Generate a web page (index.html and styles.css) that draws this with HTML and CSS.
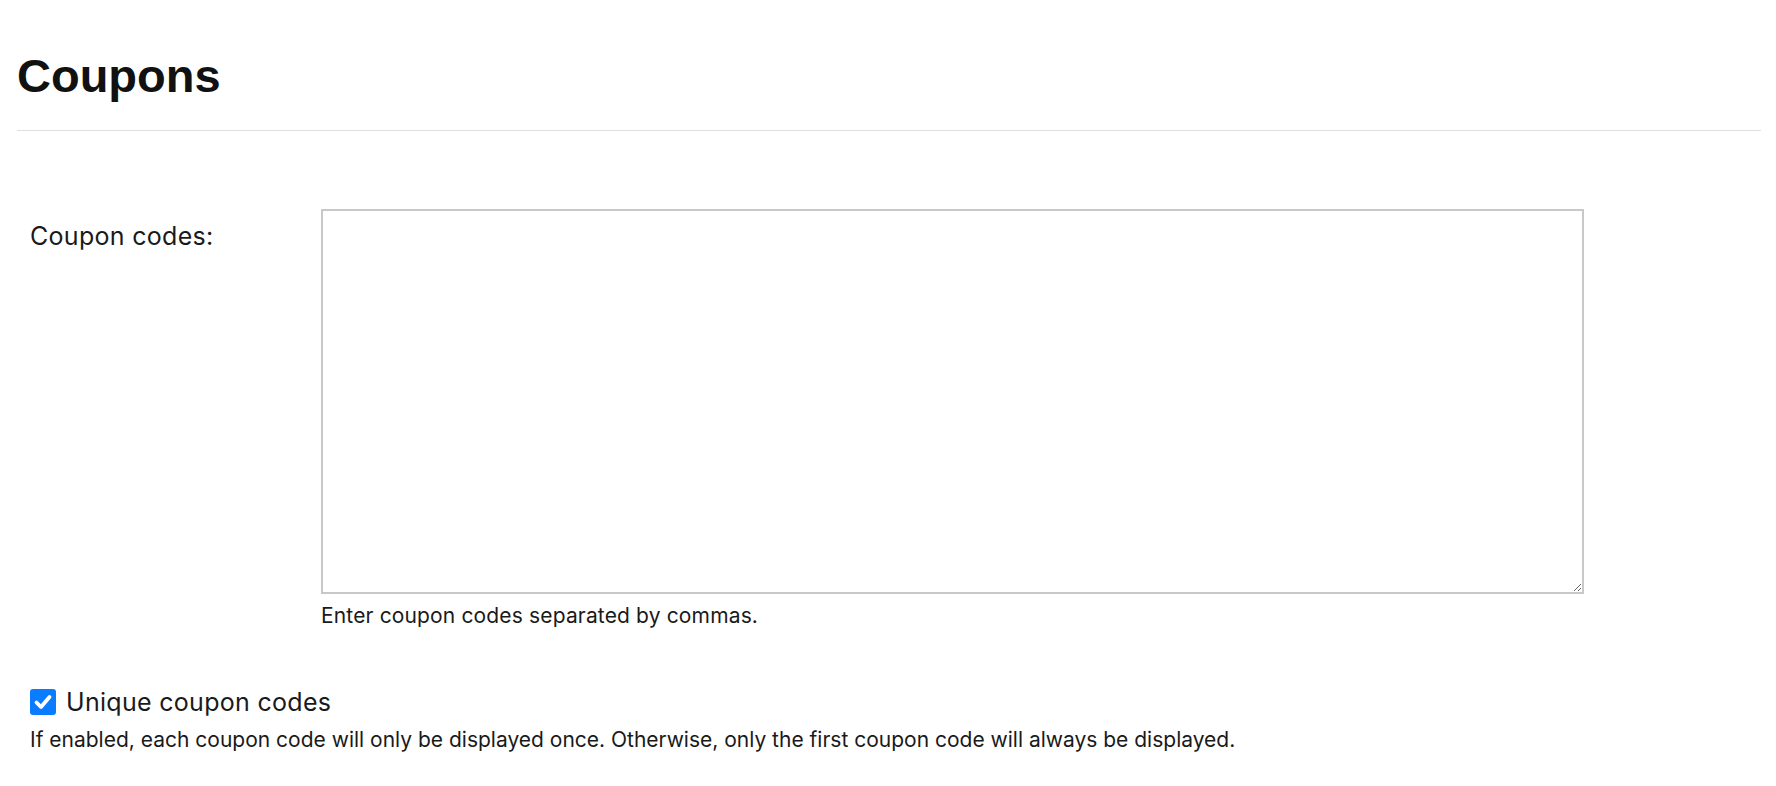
FILE: index.html
```html
<!DOCTYPE html>
<html lang="en">
<head>
<meta charset="utf-8">
<title>Coupons</title>
<link rel="stylesheet" href="styles.css">
</head>
<body>
<div class="page">
  <h1 class="title">Coupons</h1>
  <hr class="divider">
  <form class="form">
    <div class="field-row">
      <label class="field-label" for="codes">Coupon codes:</label>
      <div class="field-control">
        <textarea id="codes" class="codes"></textarea>
        <p class="help">Enter coupon codes separated by commas.</p>
      </div>
    </div>
    <div class="check-block">
      <label class="check-row">
        <input type="checkbox" class="check-input" checked>
        <span class="check-box" aria-hidden="true">
          <svg viewBox="0 0 26 26" width="26" height="26"><path d="M6.5 13.5 L11 18 L19.5 8" fill="none" stroke="#fff" stroke-width="3.8" stroke-linecap="round" stroke-linejoin="round"/></svg>
        </span>
        <span class="check-text">Unique coupon codes</span>
      </label>
      <p class="check-desc">If enabled, each coupon code will only be displayed once. Otherwise, only the first coupon code will always be displayed.</p>
    </div>
  </form>
</div>
</body>
</html>
```

FILE: styles.css
```css
html, body {
  margin: 0;
  padding: 0;
  background: #ffffff;
}

body {
  font-family: Inter, "Noto Sans", "Liberation Sans", sans-serif;
  color: #1a1a1a;
}

.page {
  padding: 0 15px 0 17px;
}

.title {
  margin: 0;
  padding-top: 52px;
  font-family: "Liberation Sans", Arial, sans-serif;
  font-weight: 700;
  font-size: 47px;
  line-height: 1;
  color: #111111;
}

.divider {
  margin: 31px 0 0 0;
  border: 0;
  height: 1px;
  background: #dedede;
}

.form {
  padding: 78px 0 0 13px;
}

.field-row {
  display: grid;
  grid-template-columns: 291px 1263px;
}

.field-label {
  padding-top: 9px;
  font-size: 25px;
  letter-spacing: 0.3px;
  line-height: 36px;
}

.field-control {
  display: flex;
  flex-direction: column;
}

.codes {
  display: block;
  box-sizing: border-box;
  width: 1263px;
  height: 385px;
  margin: 0;
  border: 2px solid #c8c8c8;
  border-radius: 0;
  background: #fff;
  font-family: inherit;
  font-size: 20px;
}

.help {
  margin: 7px 0 0 0;
  font-size: 21px;
  letter-spacing: 0.15px;
  line-height: 30px;
}

.check-block {
  padding-top: 53px;
}

.check-row {
  display: flex;
  align-items: center;
  gap: 10px;
  font-size: 25px;
  letter-spacing: 0.3px;
  line-height: 36px;
  cursor: pointer;
}

.check-input {
  position: absolute;
  opacity: 0;
  width: 0;
  height: 0;
  margin: 0;
}

.check-box {
  display: flex;
  width: 26px;
  height: 26px;
  border-radius: 3px;
  background: #0a7cff;
  flex: none;
}

.check-desc {
  margin: 5px 0 0 0;
  font-size: 21px;
  line-height: 30px;
}
```
